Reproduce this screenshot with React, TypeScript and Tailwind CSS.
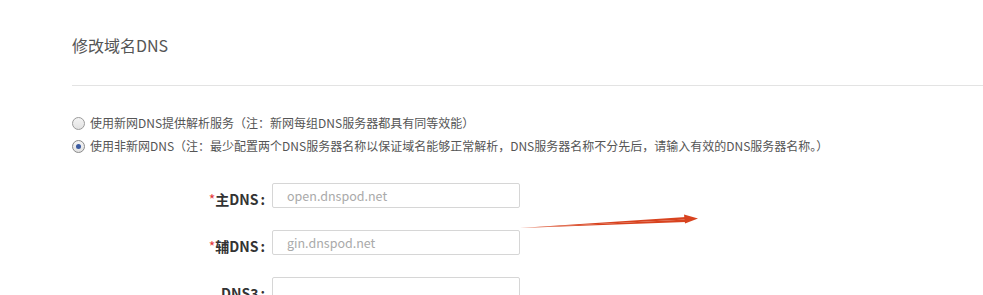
import React from 'react';

const font = { fontFamily: '"Noto Sans CJK SC", "Noto Sans", sans-serif' };

function DnsRow({ label, required, placeholder }: { label: string; required?: boolean; placeholder?: string }) {
  return (
    <div className="flex items-center h-[25px]">
      <label className="w-[272px] text-right pr-[7px] pt-[6px] text-[14px] font-bold text-[#333] leading-none">
        {required && <span className="text-[#e4393c] font-normal">*</span>}
        {label}<span className="ml-[2px]">:</span>
      </label>
      <input
        className="w-[248px] h-[25px] border border-[#d6d6d6] rounded-[2px] px-[14px] text-[12.5px] text-[#333] placeholder:text-[#aaa] outline-none"
        placeholder={placeholder}
        style={font}
      />
    </div>
  );
}

export default function App() {
  return (
    <div className="relative w-[983px] h-[295px] overflow-hidden bg-white" style={font}>
      <div className="pl-[72px]">
        <h2 className="pt-[33px] text-[16px] leading-[24px] text-[#555] font-normal">修改域名DNS</h2>
        <div className="mt-[28px] border-t border-[#e3e3e3]" />
        <div className="mt-[29px] space-y-[7px] text-[12px] text-[#555]">
          <label className="flex items-center gap-[5px] h-[16px]">
            <span className="w-[13px] h-[13px] rounded-full border border-[#9a9a9a] bg-gradient-to-b from-[#f4f4f4] to-[#e2e2e2]" />
            <span>使用新网DNS提供解析服务（注：新网每组DNS服务器都具有同等效能）</span>
          </label>
          <label className="flex items-center gap-[5px] h-[16px]">
            <span className="w-[13px] h-[13px] rounded-full border border-[#8a8a8a] bg-gradient-to-b from-[#f4f4f4] to-[#e2e2e2] flex items-center justify-center">
              <span className="w-[5px] h-[5px] rounded-full bg-[#3a5aa0]" />
            </span>
            <span>使用非新网DNS（注：最少配置两个DNS服务器名称以保证域名能够正常解析，DNS服务器名称不分先后，请输入有效的DNS服务器名称。）</span>
          </label>
        </div>
      </div>
      <div className="mt-[29px] flex flex-col gap-[22px]">
        <DnsRow label="主DNS" required placeholder="open.dnspod.net" />
        <DnsRow label="辅DNS" required placeholder="gin.dnspod.net" />
        <DnsRow label="DNS3" />
      </div>
      <svg className="absolute left-0 top-0 pointer-events-none" width="983" height="295">
        <path d="M520 228 L686 219.6 L686 217 Z" fill="#d8431f" />
        <path d="M520 228 L686 219.6 L686 222 Z" fill="#d8431f" />
        <path d="M684 214.5 L698 218.5 L685 223.5 Z" fill="#d8431f" />
      </svg>
    </div>
  );
}
